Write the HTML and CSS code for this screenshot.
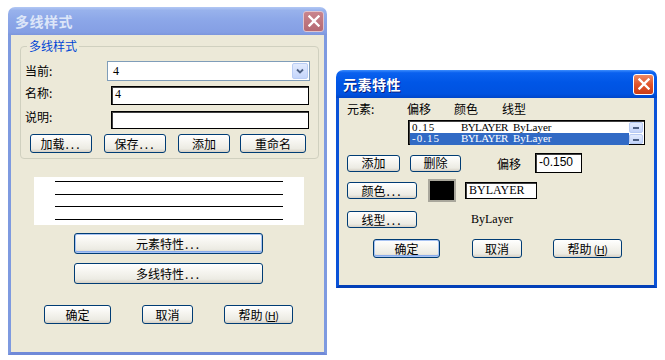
FILE: index.html
```html
<!DOCTYPE html>
<html lang="zh-CN">

<head>
    <meta charset="UTF-8">
    <title>多线样式</title>
    <link rel="stylesheet" href="styles.css">
</head>

<body>
    <!-- 多线样式 dialog (inactive) -->
    <div class="window inactive mline">
        <div class="titlebar">
            <span class="title">多线样式</span>
            <span class="close">
                <svg width="12" height="12" viewBox="0 0 12 12"><path d="M1.5 1.5 L10.5 10.5 M10.5 1.5 L1.5 10.5" stroke="#fff" stroke-width="2.4" stroke-linecap="square"/></svg>
            </span>
        </div>
        <div class="client">
            <fieldset class="group">
                <legend>多线样式</legend>
                <div class="row">
                    <span class="lbl">当前:</span>
                    <div class="combo">
                        <span class="val">4</span>
                        <span class="drop">
                            <svg width="8" height="6" viewBox="0 0 8 6"><path d="M1 1.5 L4 4.5 L7 1.5" fill="none" stroke="#4d6185" stroke-width="1.8"/></svg>
                        </span>
                    </div>
                </div>
                <div class="row">
                    <span class="lbl">名称:</span>
                    <div class="edit name">4</div>
                </div>
                <div class="row">
                    <span class="lbl">说明:</span>
                    <div class="edit desc"></div>
                </div>
                <div class="btnrow">
                    <button class="btn b-load">加载<span class="dots">...</span></button>
                    <button class="btn b-save">保存<span class="dots">...</span></button>
                    <button class="btn b-add">添加</button>
                    <button class="btn b-rename">重命名</button>
                </div>
            </fieldset>

            <div class="preview">
                <div class="pline"></div>
                <div class="pline"></div>
                <div class="pline"></div>
                <div class="pline"></div>
            </div>

            <div class="bigbtns">
                <button class="btn wide default">元素特性<span class="dots">...</span></button>
                <button class="btn wide">多线特性<span class="dots">...</span></button>
            </div>

            <div class="okrow">
                <button class="btn b-ok">确定</button>
                <button class="btn b-cancel">取消</button>
                <button class="btn b-help">帮助 <span class="acc">(<u>H</u>)</span></button>
            </div>
        </div>
    </div>

    <!-- 元素特性 dialog (active) -->
    <div class="window active elem">
        <div class="titlebar">
            <span class="title">元素特性</span>
            <span class="close">
                <svg width="12" height="12" viewBox="0 0 12 12"><path d="M1.5 1.5 L10.5 10.5 M10.5 1.5 L1.5 10.5" stroke="#fff" stroke-width="2.4" stroke-linecap="square"/></svg>
            </span>
        </div>
        <div class="client">
            <div class="heads">
                <span class="h-elem">元素:</span>
                <span class="h-off">偏移</span>
                <span class="h-col">颜色</span>
                <span class="h-lt">线型</span>
            </div>
            <div class="listbox">
                <div class="items">
                    <div class="item"><span class="c1">0.15</span><span class="c2">BYLAYER</span><span class="c3">ByLayer</span></div>
                    <div class="item sel"><span class="c1">-0.15</span><span class="c2">BYLAYER</span><span class="c3">ByLayer</span></div>
                </div>
                <div class="scroll">
                    <span class="sbtn up"></span>
                    <span class="sbtn down"></span>
                </div>
            </div>
            <div class="erow r1">
                <button class="btn e-add">添加</button>
                <button class="btn e-del">删除</button>
                <span class="off-lbl">偏移</span>
                <div class="edit off">-0.150</div>
            </div>
            <div class="erow r2">
                <button class="btn e-wide">颜色<span class="dots">...</span></button>
                <span class="swatch"></span>
                <div class="edit color">BYLAYER</div>
            </div>
            <div class="erow r3">
                <button class="btn e-wide">线型<span class="dots">...</span></button>
                <span class="lt-val">ByLayer</span>
            </div>
            <div class="erow r4">
                <button class="btn e-ok default">确定</button>
                <button class="btn e-cancel">取消</button>
                <button class="btn e-help">帮助 <span class="acc">(<u>H</u>)</span></button>
            </div>
        </div>
    </div>
</body>

</html>
```

FILE: styles.css
```css
body {
    margin: 0;
    background: #fff;
    width: 665px;
    height: 360px;
    position: relative;
    font-family: "Noto Sans CJK SC", sans-serif;
    font-size: 12px;
    color: #000;
}

/* windows sit on a free desktop */
.window {
    position: absolute;
    display: flex;
    flex-direction: column;
}

.mline {
    left: 8px;
    top: 7px;
    width: 319px;
    height: 348px;
}

.elem {
    left: 336px;
    top: 70px;
    width: 321px;
    height: 218px;
}

.titlebar {
    height: 28px;
    flex: none;
    border-radius: 7px 7px 0 0;
    display: flex;
    align-items: center;
    justify-content: space-between;
    padding: 0 3px 0 7px;
}

.title {
    font-weight: bold;
    font-size: 14px;
    letter-spacing: 0.5px;
}

.close {
    width: 19px;
    height: 19px;
    border-radius: 3px;
    display: flex;
    align-items: center;
    justify-content: center;
}

.inactive .titlebar {
    background: linear-gradient(#b3c8f4 0, #98b2ec 12%, #8ba6e8 50%, #859fe4 90%, #7d96dc 100%);
}

.inactive .title {
    color: #dde6f8;
}

.inactive .close {
    background: linear-gradient(#c9848d, #b56a73);
    border: 1px solid #e0c4cc;
}

.active .titlebar {
    background: linear-gradient(#3d8dfd 0, #0a61ef 10%, #0056e6 45%, #0052e0 85%, #0046c9 100%);
}

.active .title {
    color: #fff;
    text-shadow: 1px 1px #0a1f80;
}

.active .close {
    background: linear-gradient(#ec8a65, #e0542b 50%, #cc3d16);
    border: 1px solid #fff;
}

.client {
    flex: 1;
    background: #ece9d8;
    border: 3px solid;
    border-top: 0;
    display: flex;
    flex-direction: column;
}

.inactive .client {
    border-color: #7e9ae0;
    border-bottom-color: #6f89d8;
}

.active .client {
    border-color: #0a52d8;
    border-bottom-color: #0340b8;
}

/* buttons */
.btn {
    font-family: "Noto Sans CJK SC", sans-serif;
    font-size: 12px;
    color: #000;
    padding: 0;
    margin: 0;
    border: 1px solid #003c74;
    border-radius: 3px;
    background: linear-gradient(#ffffff 0, #f6f5f0 40%, #ecebe3 80%, #d6d0c5 100%);
    line-height: 14px;
    display: flex;
    align-items: center;
    justify-content: center;
    flex: none;
}

.btn.default {
    box-shadow: inset 0 0 0 1px #a9c4f3, inset 0 -1px 0 1px #8aacec;
}

.dots {
    letter-spacing: 2px;
    margin-left: 1px;
}

.acc {
    font-size: 11px;
    margin-left: 2px;
    letter-spacing: -0.5px;
}

.edit {
    background: #fff;
    border: 1px solid #000;
    box-shadow: inset 1px 1px 0 #404040;
    font-family: "Liberation Serif", serif;
    font-size: 12px;
    line-height: 15px;
    padding-left: 3px;
    box-sizing: border-box;
}

/* 多线样式 group */
.group {
    margin: 4px 5px 0 9px;
    padding: 8px 4px 5px 4px;
    border: 1px solid #d0d0bf;
    border-radius: 4px;
    display: flex;
    flex-direction: column;
}

.group legend {
    color: #0046d5;
    font-size: 12px;
    line-height: 14px;
    padding: 0 2px;
    margin-left: 2px;
}

.row {
    display: flex;
    align-items: center;
}

.lbl {
    width: 82px;
    flex: none;
    line-height: 14px;
}

.combo {
    width: 203px;
    height: 20px;
    box-sizing: border-box;
    border: 1px solid #7f9db9;
    background: #fff;
    display: flex;
    align-items: center;
    justify-content: space-between;
    padding: 1px;
}

.combo .val {
    font-family: "Liberation Serif", serif;
    padding-left: 4px;
}

.drop {
    width: 16px;
    height: 16px;
    box-sizing: border-box;
    border: 1px solid #b9cdf5;
    border-radius: 2px;
    background: linear-gradient(#e2ebfe, #c4d5fb);
    display: flex;
    align-items: center;
    justify-content: center;
}

.edit.name {
    margin: 5px 0 0 4px;
    width: 198px;
    height: 19px;
}

.edit.desc {
    margin: 6px 0 0 4px;
    width: 198px;
    height: 18px;
}

.btnrow {
    display: flex;
    margin: 5px 0 0 5px;
}

.btnrow .btn {
    height: 19px;
}

.b-load { width: 62px; }
.b-save { width: 62px; margin-left: 12px; }
.b-add { width: 52px; margin-left: 12px; }
.b-rename { width: 66px; margin-left: 10px; }

.preview {
    margin: 18px 0 0 23px;
    width: 270px;
    height: 48px;
    background: #fff;
    box-sizing: border-box;
    padding: 4px 21px 5px 21px;
    display: flex;
    flex-direction: column;
    justify-content: space-between;
}

.pline {
    height: 1px;
    background: #000;
}

.bigbtns {
    display: flex;
    flex-direction: column;
    gap: 9px;
    margin: 8px 0 0 63px;
}

.btn.wide {
    width: 189px;
    height: 21px;
}

.okrow {
    display: flex;
    margin: 21px 0 0 33px;
}

.okrow .btn {
    height: 19px;
}

.b-ok { width: 67px; }
.b-cancel { width: 51px; margin-left: 31px; }
.b-help { width: 69px; margin-left: 31px; }

/* 元素特性 */
.heads {
    display: flex;
    line-height: 14px;
    margin-top: 4px;
    padding-left: 8px;
}

.h-elem { width: 60px; }
.h-off { width: 47px; }
.h-col { width: 48px; }

.listbox {
    margin: 4px 0 0 69px;
    width: 237px;
    height: 25px;
    box-sizing: border-box;
    border: 1px solid #000;
    box-shadow: inset 1px 1px 0 #404040;
    background: #fff;
    display: flex;
    padding: 1px 1px 0 1px;
}

.items {
    flex: 1;
}

.item {
    height: 11px;
    line-height: 11px;
    font-family: "Liberation Serif", serif;
    font-size: 11px;
    display: flex;
    padding-left: 2px;
    white-space: nowrap;
}

.item.sel {
    background: #316ac5;
    color: #fff;
    height: 12px;
}

.c1 { width: 49px; letter-spacing: 1px; }
.c2 { width: 52px; letter-spacing: -0.6px; }

.scroll {
    width: 14px;
    display: flex;
    flex-direction: column;
    gap: 1px;
}

.sbtn {
    flex: 1;
    border: 1px solid #b7cbf4;
    border-radius: 2px;
    background: linear-gradient(#e3ecfe, #c3d4fa);
    position: relative;
}

.sbtn::after {
    content: '';
    position: absolute;
    left: 3px;
    top: 4px;
    width: 6px;
    height: 2px;
    background: #4d6185;
}

.erow {
    display: flex;
    align-items: center;
    padding-left: 8px;
}

.erow .btn {
    height: 17px;
}

.r1 { margin-top: 8px; }
.r2 { margin-top: 6px; }
.r3 { margin-top: 9px; }
.r4 { margin-top: 11px; padding-left: 34px; }

.e-add { width: 53px; }
.e-del { width: 51px; margin-left: 10px; }

.off-lbl {
    margin-left: 36px;
    width: 24px;
}

.edit.off {
    margin-left: 14px;
    width: 47px;
    height: 20px;
    font-family: "Liberation Sans", sans-serif;
    line-height: 17px;
}

.btn.e-wide {
    width: 70px;
}

.swatch {
    margin-left: 11px;
    width: 28px;
    height: 23px;
    box-sizing: border-box;
    border: 2px solid #a9a79c;
    background: #000;
}

.edit.color {
    margin-left: 9px;
    width: 72px;
    height: 17px;
}

.lt-val {
    margin-left: 54px;
    font-family: "Liberation Serif", serif;
}

.erow.r4 .btn {
    height: 19px;
}

.e-ok { width: 67px; }
.e-cancel { width: 50px; margin-left: 32px; }
.e-help { width: 69px; margin-left: 31px; }
```
